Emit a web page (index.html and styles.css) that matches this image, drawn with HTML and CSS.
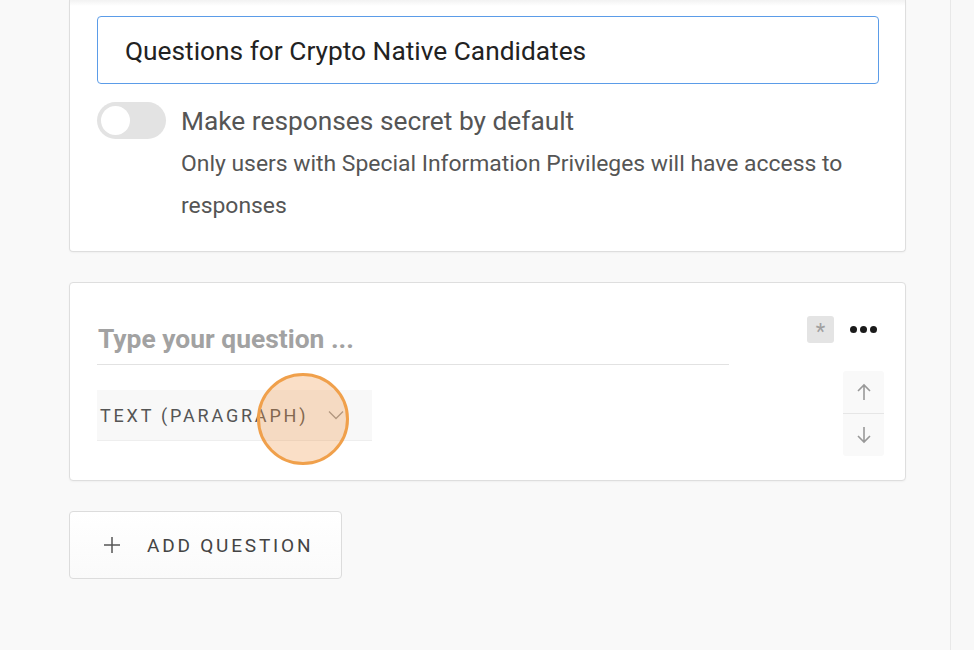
FILE: index.html
```html
<!DOCTYPE html>
<html>
<head>
<meta charset="utf-8">
<link rel="stylesheet" href="styles.css">
</head>
<body>
<div class="page">
  <div class="main">
    <div class="card card-top">
      <div class="title-input">Questions for Crypto Native Candidates</div>
      <div class="toggle-row">
        <div class="toggle"><div class="knob"></div></div>
        <div class="toggle-text">
          <div class="toggle-label">Make responses secret by default</div>
          <div class="toggle-help">Only users with Special Information Privileges will have access to responses</div>
        </div>
      </div>
    </div>

    <div class="card card-question">
      <div class="q-left">
        <div class="q-field">Type your question ...</div>
        <div class="q-type">
          <span class="q-type-text">TEXT (PARAGRAPH)</span>
          <svg class="chev" width="16" height="10" viewBox="0 0 16 10"><path d="M1 1.5 L8 8.5 L15 1.5" fill="none" stroke="#999" stroke-width="1.3"/></svg>
        </div>
      </div>
      <div class="q-right">
        <div class="q-tools">
          <div class="req">*</div>
          <div class="dots"><span></span><span></span><span></span></div>
        </div>
        <div class="move">
          <div class="move-btn">
            <svg width="16" height="18" viewBox="0 0 16 18"><path d="M8 17 V2 M2 8 L8 2 L14 8" fill="none" stroke="#999" stroke-width="1.6"/></svg>
          </div>
          <div class="move-btn">
            <svg width="16" height="18" viewBox="0 0 16 18"><path d="M8 1 V16 M2 10 L8 16 L14 10" fill="none" stroke="#999" stroke-width="1.6"/></svg>
          </div>
        </div>
      </div>
      <div class="click-mark"></div>
    </div>

    <div class="add-btn">
      <svg class="plus" width="18" height="18" viewBox="0 0 18 18"><path d="M9 1 V17 M1 9 H17" stroke="#555" stroke-width="1.5"/></svg>
      <span class="add-text">ADD QUESTION</span>
    </div>
  </div>
  <div class="side"></div>
</div>
</body>
</html>
```

FILE: styles.css
```css
html, body {
  margin: 0;
  padding: 0;
}
body {
  background: #f9f9f9;
  font-family: Roboto, "Noto Sans", "Liberation Sans", sans-serif;
  overflow: hidden;
}
.page {
  display: flex;
  width: 974px;
  height: 650px;
}
.main {
  width: 837px;
  padding: 0 44px 0 69px;
  display: flex;
  flex-direction: column;
}
.side {
  flex: 1;
  border-left: 1px solid #e8e8e8;
  background: #f8f8f8;
}
.card {
  background: #fff;
  border: 1px solid #dedede;
  border-radius: 4px;
  box-shadow: 0 1px 2px rgba(0,0,0,0.04);
}
.card-top {
  border-top: none;
  border-radius: 0 0 4px 4px;
  height: 252px;
  box-sizing: border-box;
  padding: 16px 26px 0 27px;
  background: linear-gradient(#f2f2f2 0, #fff 6px);
}
.title-input {
  height: 68px;
  box-sizing: border-box;
  border: 1.5px solid #5b9ce8;
  border-radius: 4px;
  padding-left: 27px;
  padding-top: 2px;
  display: flex;
  align-items: center;
  font-size: 26.3px;
  color: #222;
  background: #fff;
}
.toggle-row {
  display: flex;
  margin-top: 18px;
}
.toggle {
  width: 69px;
  height: 37px;
  border-radius: 19px;
  background: #e3e3e3;
  flex: 0 0 auto;
  position: relative;
}
.knob {
  position: absolute;
  left: 4px;
  top: 4px;
  width: 29px;
  height: 29px;
  border-radius: 50%;
  background: #fff;
}
.toggle-text {
  margin-left: 15px;
  width: 680px;
}
.toggle-label {
  font-size: 26.3px;
  color: #555;
  line-height: 38px;
}
.toggle-help {
  font-size: 22.9px;
  color: #555;
  line-height: 42px;
  margin-top: 3px;
}
.card-question {
  margin-top: 30px;
  height: 199px;
  box-sizing: border-box;
  padding: 35px 21px 0 27px;
  display: flex;
  position: relative;
}
.q-left {
  width: 632px;
}
.q-field {
  height: 47px;
  box-sizing: border-box;
  border-bottom: 1px solid #e2e2e2;
  font-size: 26.4px;
  font-weight: bold;
  color: #a2a2a2;
  line-height: 42px;
  padding-left: 1px;
}
.q-type {
  margin-top: 25px;
  width: 275px;
  height: 51px;
  box-sizing: border-box;
  background: #f8f8f8;
  border-bottom: 1px solid #eeeeee;
  display: flex;
  align-items: center;
  padding-left: 3px;
}
.q-type-text {
  font-size: 18px;
  letter-spacing: 2.8px;
  color: #555;
}
.chev {
  margin-left: 20px;
}
.q-right {
  margin-left: auto;
  margin-top: -2px;
  width: 77px;
  display: flex;
  flex-direction: column;
  align-items: flex-end;
}
.q-tools {
  display: flex;
  align-items: center;
  width: 77px;
}
.req {
  width: 27px;
  height: 27px;
  border-radius: 3px;
  background: #e4e4e4;
  color: #a0a0a0;
  font-size: 22px;
  text-align: center;
  line-height: 32px;
}
.dots {
  display: flex;
  gap: 3px;
  margin-left: 16px;
}
.dots span {
  width: 7px;
  height: 7px;
  border-radius: 50%;
  background: #1a1a1a;
}
.move {
  margin-top: 28px;
  width: 41px;
  background: #f9f9f9;
  border-radius: 3px;
}
.move-btn {
  height: 42px;
  display: flex;
  align-items: center;
  justify-content: center;
}
.move-btn + .move-btn {
  border-top: 1.5px solid #e6e6e6;
}
.click-mark {
  position: absolute;
  left: 187px;
  top: 90px;
  width: 92px;
  height: 92px;
  box-sizing: border-box;
  border-radius: 50%;
  border: 3px solid #f0a04b;
  background: rgba(240, 150, 70, 0.3);
}
.add-btn {
  margin-top: 30px;
  width: 273px;
  height: 68px;
  box-sizing: border-box;
  background: linear-gradient(#fff, #fafafa);
  border: 1px solid #dcdcdc;
  border-radius: 4px;
  display: flex;
  align-items: center;
  padding-left: 33px;
}
.add-text {
  margin-left: 26px;
  font-size: 19px;
  letter-spacing: 2.8px;
  color: #444;
}
```
